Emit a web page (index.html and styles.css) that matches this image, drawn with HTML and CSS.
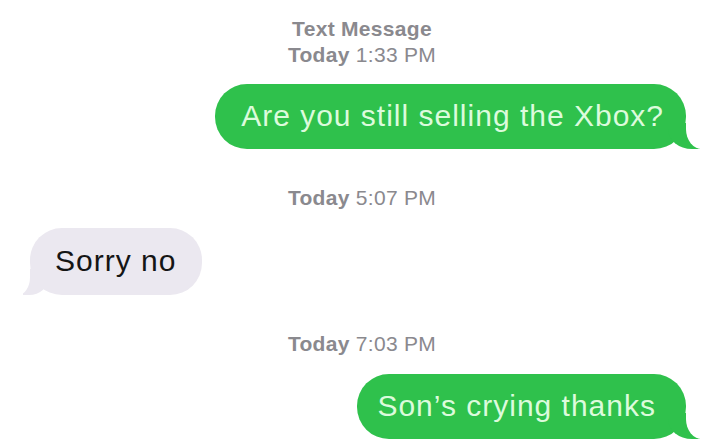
FILE: index.html
```html
<!DOCTYPE html>
<html lang="en">
<head>
<meta charset="utf-8">
<title>Text Message</title>
<link rel="stylesheet" href="styles.css">
</head>
<body>
<div class="thread">
  <div class="stamp stamp-first">
    <div class="service">Text Message</div>
    <div><b>Today</b> 1:33 PM</div>
  </div>
  <div class="row row-sent">
    <div class="bubble bubble-sent">Are you still selling the Xbox?</div>
  </div>
  <div class="stamp"><b>Today</b> 5:07 PM</div>
  <div class="row row-recv">
    <div class="bubble bubble-recv">Sorry no</div>
  </div>
  <div class="stamp"><b>Today</b> 7:03 PM</div>
  <div class="row row-sent">
    <div class="bubble bubble-sent bubble-last">Son’s crying thanks</div>
  </div>
</div>
</body>
</html>
```
FILE: styles.css
```css
html, body {
  margin: 0;
  padding: 0;
  background: #ffffff;
}
body {
  width: 720px;
  height: 440px;
  overflow: hidden;
  font-family: "Liberation Sans", Arial, sans-serif;
}
.thread {
  display: flex;
  flex-direction: column;
  padding-top: 16px;
}
.stamp {
  text-align: center;
  padding-left: 4px;
  font-size: 21px;
  line-height: 26px;
  letter-spacing: 0.3px;
  color: #8a898e;
  margin-top: 36px;
  margin-bottom: 17px;
}
.stamp b {
  font-weight: bold;
}
.stamp-first {
  margin-top: 0;
  margin-bottom: 16px;
}
.service {
  font-weight: bold;
}
.row {
  display: flex;
}
.row-sent {
  justify-content: flex-end;
  padding-right: 34px;
}
.row-recv {
  justify-content: flex-start;
  padding-left: 30px;
}
.bubble {
  position: relative;
  font-size: 30px;
  line-height: 33px;
  letter-spacing: 1px;
  padding: 15px 22px 17px 26px;
  border-radius: 32px;
}
.bubble-sent {
  background: #2fc14c;
  color: #dcfbdc;
}
.bubble-last {
  padding-left: 20px;
  padding-right: 30px;
}
.bubble-recv {
  background: #ebe8f0;
  color: #151515;
  padding: 16px 26px 18px 25px;
}
.bubble::before,
.bubble::after {
  content: "";
  position: absolute;
  bottom: 0;
  height: 26px;
}
.bubble-sent::before {
  right: -14px;
  width: 32px;
  background: #2fc14c;
  border-bottom-left-radius: 24px 20px;
}
.bubble-sent::after {
  right: -22px;
  width: 22px;
  background: #ffffff;
  border-bottom-left-radius: 16px 20px;
}
.bubble-recv::before {
  left: -7px;
  width: 26px;
  background: #ebe8f0;
  border-bottom-right-radius: 20px 18px;
}
.bubble-recv::after {
  left: -14px;
  width: 14px;
  background: #ffffff;
  border-bottom-right-radius: 12px 18px;
}
```
